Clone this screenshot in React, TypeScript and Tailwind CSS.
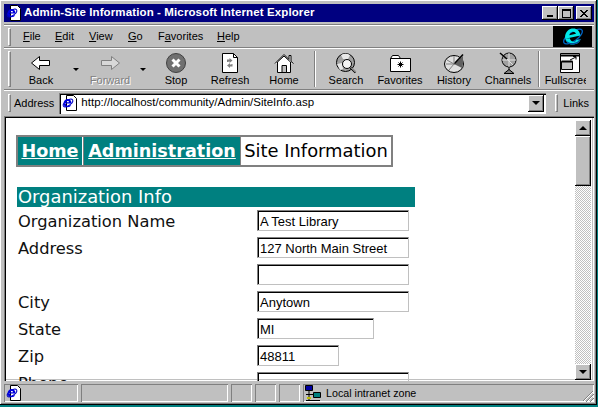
const raised = "shadow-[inset_-1px_-1px_0_#000,inset_1px_1px_0_#fff,inset_-2px_-2px_0_#808080]";
const sunkenCell = "shadow-[inset_1px_1px_0_#808080,inset_-1px_-1px_0_#fff]";
const groove = "border-t border-t-[#808080] shadow-[inset_0_1px_0_#fff]";

const Grip = ({ h }: { h: string }) => (
  <div className={`w-[3px] shrink-0 border-l border-t border-white border-r border-b border-r-[#808080] border-b-[#808080] ${h}`} />
);

const IeLogo = () => (
  <svg width="24" height="21" viewBox="0 0 24 21" fill="none">
    <ellipse cx="12" cy="10.500" rx="11" ry="4.500" transform="rotate(-35 12 10.500)" stroke="#0060c0" strokeWidth="1.300" />
    <g transform="rotate(-12 12 10.500) translate(1 -0.500)">
      <path d="M3 11.500h15.500c.3-5.500-2.800-8.500-7-8.500C6.800 3 3 6.800 3 11.500c0 4.500 3.300 7.500 8 7.500 3.300 0 5.600-1.400 7-4h-4.500c-.7.900-1.500 1.300-2.500 1.300-2 0-3.300-1.700-3.500-4.300zM7.700 9c.3-1.600 1.700-2.800 3.600-2.800 1.700 0 3 1.100 3.200 2.800z" fill="#00e8e8" fillRule="evenodd" />
      <path d="M3 12.500c.3 3.900 3.500 6.500 8 6.500 3.300 0 5.600-1.400 7-4l-1-.5c-1.300 2-3.200 3-6 3-3.500 0-6.500-2-8-5z" fill="#0050a0" />
    </g>
  </svg>
);

const PageIe = () => (
  <div className="relative h-[16px] w-[16px] shrink-0">
    <svg width="16" height="16" viewBox="0 0 16 16">
      <path d="M4.500.5h7l3 3v12h-10z" fill="#fff" stroke="#000" />
    </svg>
    <div className="absolute left-0 top-[2px]">
      <svg width="12" height="12" viewBox="0 0 12 12" fill="none">
        <ellipse cx="6" cy="6" rx="5.500" ry="2.500" transform="rotate(-35 6 6)" stroke="#0000c0" />
        <path d="M1.500 6.500h8c0-3-1.500-4.500-3.700-4.500C3.500 2 1.500 3.800 1.500 6.500c0 2.300 1.800 3.800 4 3.800 1.800 0 3-.8 3.700-2H7c-.3.400-.8.600-1.300.6-1 0-1.700-.7-1.800-1.900zM4 5.200c.2-.8.800-1.300 1.700-1.300.8 0 1.300.5 1.400 1.300z" fill="#0000e0" fillRule="evenodd" />
      </svg>
    </div>
  </div>
);

const BackIcon = () => (
  <svg width="22" height="16" viewBox="0 0 22 16">
    <path d="M1.500 8 9.500 1.500v4h10v5h-10v4z" fill="#fff" stroke="#000" />
  </svg>
);
const ForwardIcon = () => (
  <svg width="22" height="16" viewBox="0 0 22 16">
    <path d="M20.500 8 12.500 1.500v4h-10v5h10v4z" fill="#d8d8d8" stroke="#808080" />
  </svg>
);
const StopIcon = () => (
  <svg width="20" height="20" viewBox="0 0 20 20">
    <circle cx="10" cy="10" r="9.500" fill="#707070" stroke="#404040" />
    <path d="M6.500 6.500l7 7M13.500 6.500l-7 7" stroke="#fff" strokeWidth="3" />
  </svg>
);
const RefreshIcon = () => (
  <svg width="18" height="20" viewBox="0 0 18 20" fill="none">
    <path d="M1.500.5h11l4 4v15h-15z" fill="#fff" stroke="#000" />
    <path d="M12.500.5v4h4" stroke="#000" />
    <path d="M6 9V6.500h2.500V5l3 2.500-3 2.500V8.500H7.500V9z" fill="#808080" />
    <path d="M11.500 11v2.500H9V15l-3-2.500L9 10v1.500h1.500V11z" fill="#808080" />
  </svg>
);
const HomeIcon = () => (
  <svg width="20" height="20" viewBox="0 0 20 20">
    <path d="M1 10.500 10 1.500l5 5V2.500h2v6l2.500 2" fill="#fff" stroke="#000" />
    <path d="M3.500 9v10.500h13V9L10 3z" fill="#fff" stroke="#000" />
    <path d="M8 19.500v-7h4.500v7z" fill="#c0c0c0" stroke="#000" />
  </svg>
);
const SearchIcon = () => (
  <svg width="21" height="21" viewBox="0 0 21 21" fill="none">
    <circle cx="9.500" cy="9.500" r="9" fill="#a0a0a0" stroke="#000" />
    <path d="M5 2a9 9 0 0 1 9 0l-2 4H7zM1 11l5-1 1 6-3 1z" fill="#e8e8e8" />
    <circle cx="11" cy="11" r="4.500" fill="#f4f4f4" stroke="#000" />
    <path d="M14.500 14.500l5 5" stroke="#000" strokeWidth="2" />
    <path d="M15 14.500l4.500 4.500" stroke="#fff" />
  </svg>
);
const FavoritesIcon = () => (
  <svg width="21" height="17" viewBox="0 0 21 17">
    <path d="M.5 16.500V3.500l2-3h6l2 3h10v13z" fill="#fff" stroke="#000" />
    <path d="M.5 3.500h20" stroke="#000" />
    <path d="M10.500 6.500v6M7.500 9.500h6M8.500 7.500l4 4M12.500 7.500l-4 4" stroke="#000" />
  </svg>
);
const HistoryIcon = () => (
  <svg width="21" height="20" viewBox="0 0 21 20">
    <ellipse cx="10" cy="11" rx="9.500" ry="8.500" fill="#e0e0e0" stroke="#000" />
    <path d="M10 11l9-8v8l-1 4z" fill="#606060" />
    <path d="M10 11L19 1.500" stroke="#000" strokeWidth="1.500" />
    <path d="M10 11V3M10 11L3 7M10 11H2M10 11l-5 6" stroke="#808080" />
  </svg>
);
const ChannelsIcon = () => (
  <svg width="18" height="22" viewBox="0 0 18 22">
    <circle cx="10" cy="8" r="7" fill="#a0a0a0" stroke="#000" />
    <path d="M5 4l9 9M10 1v14M3 8h14" stroke="#e0e0e0" />
    <path d="M1 1l7 6" stroke="#000" strokeWidth="1.500" />
    <path d="M10 15v3M5 21.500l5-4 5 4z" fill="#808080" stroke="#000" />
  </svg>
);
const FullscreenIcon = () => (
  <svg width="20" height="20" viewBox="0 0 20 20" fill="none">
    <path d="M.5.500h19v19H.500z" fill="#fff" stroke="#000" />
    <path d="M1 1.500h18v2H1z" fill="#000" />
    <path d="M1.500 8.500h11v8h-11z" fill="#c0c0c0" stroke="#000" />
    <path d="M1.500 8.500h11" stroke="#000" strokeWidth="2" />
    <path d="M10 7l6-3M13 3.500h3v3" stroke="#000" />
  </svg>
);
const NetworkIcon = () => (
  <svg width="16" height="16" viewBox="0 0 16 16">
    <path d="M.5.500h7v5h-7z" fill="#0000a0" stroke="#000" />
    <path d="M8.500 7.500h7v5h-7z" fill="#008080" stroke="#000" />
    <path d="M4 6v9M1 9.500h7M1 15.500h14" stroke="#000" />
    <path d="M2 12h4v2H2z" fill="#c0c000" />
  </svg>
);

const ToolButton = ({ label, icon, disabled }: { label: string; icon: React.ReactNode; disabled?: boolean }) => (
  <div className="flex w-[54px] shrink-0 flex-col items-center">
    <div className="flex h-[24px] items-center justify-center">{icon}</div>
    <span className={`-mt-[1px] whitespace-nowrap text-[11px] leading-[13px] ${disabled ? "text-[#808080] [text-shadow:1px_1px_0_#fff]" : ""}`}>
      {label}
    </span>
  </div>
);

const Caret = ({ w }: { w: string }) => (
  <div className={`flex shrink-0 justify-center pt-[17px] ${w}`}>
    <div className="h-0 w-0 border-x-[3px] border-t-[3px] border-x-transparent border-t-black" />
  </div>
);

const ToolSep = () => <div className="mx-[3px] h-[36px] w-[2px] shrink-0 border-l border-r border-l-[#808080] border-r-white" />;

const Field = ({ label, value, width }: { label?: string; value?: string; width: string }) => (
  <div className="flex h-[27px] items-start">
    <div className="w-[240px] shrink-0 pl-[1px] pt-[1px] font-['DejaVu_Sans'] text-[16.3px] leading-[21px] text-[#111]">{label}</div>
    <div className={`h-[21px] border border-[#c0c0c0] border-l-[#808080] border-t-[#808080] shadow-[inset_1px_1px_0_#000] pl-[2px] pt-[3px] text-[13px] leading-[16px] ${width}`}>
      {value}
    </div>
  </div>
);

export default function App() {
  return (
    <div className="h-[407px] w-[598px] overflow-hidden bg-[#008080] font-['Liberation_Sans',sans-serif] text-black">
      <div className="flex h-[405px] w-[597px] flex-col bg-[#c0c0c0] p-[4px] pr-[3px] shadow-[inset_-1px_-1px_0_#000,inset_1px_1px_0_#fff,inset_-2px_-2px_0_#808080]">
        {/* title bar */}
        <div className="flex h-[18px] shrink-0 items-center bg-[#000080] pl-[2px] pr-[2px] text-white">
          <div className="mr-[2px] shrink-0"><PageIe /></div>
          <span className="whitespace-nowrap text-[11.5px] font-bold tracking-[0.12px]">Admin-Site Information - Microsoft Internet Explorer</span>
          <div className="ml-auto flex text-black">
            <div className={`flex h-[14px] w-[16px] items-end justify-center pb-[3px] bg-[#c0c0c0] ${raised}`}><div className="h-[2px] w-[6px] bg-black" /></div>
            <div className={`flex h-[14px] w-[16px] items-center justify-center bg-[#c0c0c0] ${raised}`}><div className="h-[9px] w-[9px] border border-t-2 border-black" /></div>
            <div className={`ml-[2px] flex h-[14px] w-[16px] items-center justify-center bg-[#c0c0c0] ${raised}`}>
              <svg width="8" height="7" viewBox="0 0 8 7"><path d="M0 0l7 7M1 0l7 7M7 0L0 7M8 0L1 7" stroke="#000" /></svg>
            </div>
          </div>
        </div>

        {/* menu row */}
        <div className="mt-[2px] flex h-[23px] shrink-0 items-center shadow-[inset_0_1px_0_#808080,inset_0_2px_0_#fff]">
          <div className="ml-[4px] mt-[2px]"><Grip h="h-[18px]" /></div>
          <div className="mt-[2px] flex text-[11px]">
            <span className="ml-[12px] w-[32px]"><u>F</u>ile</span>
            <span className="w-[34px]"><u>E</u>dit</span>
            <span className="w-[39px]"><u>V</u>iew</span>
            <span className="w-[30px]"><u>G</u>o</span>
            <span className="w-[59px]">F<u>a</u>vorites</span>
            <span><u>H</u>elp</span>
          </div>
          <div className="ml-auto mr-[2px] mt-[2px] flex h-[21px] w-[39px] items-center justify-center overflow-hidden bg-black">
            <IeLogo />
          </div>
        </div>

        {/* toolbar */}
        <div className={`flex h-[42px] shrink-0 items-start overflow-hidden pt-[3px] ${groove}`}>
          <div className="ml-[4px]"><Grip h="h-[36px]" /></div>
          <div className="ml-[3px] flex w-[573px] shrink-0 items-start overflow-hidden">
            <ToolButton label="Back" icon={<BackIcon />} />
            <Caret w="w-[15px]" />
            <ToolButton label="Forward" icon={<ForwardIcon />} disabled />
            <Caret w="w-[12px]" />
            <ToolButton label="Stop" icon={<StopIcon />} />
            <ToolButton label="Refresh" icon={<RefreshIcon />} />
            <ToolButton label="Home" icon={<HomeIcon />} />
            <ToolSep />
            <ToolButton label="Search" icon={<SearchIcon />} />
            <ToolButton label="Favorites" icon={<FavoritesIcon />} />
            <ToolButton label="History" icon={<HistoryIcon />} />
            <ToolButton label="Channels" icon={<ChannelsIcon />} />
            <div className="ml-[3px] h-[36px] w-[2px] shrink-0 border-l border-r border-l-[#808080] border-r-white" />
            <div className="w-[46px] shrink-0 overflow-hidden"><div className="ml-[3px]"><ToolButton label="Fullscreen" icon={<FullscreenIcon />} /></div></div>
          </div>
        </div>

        {/* address bar */}
        <div className={`flex h-[27px] shrink-0 items-center ${groove}`}>
          <div className="ml-[4px]"><Grip h="h-[18px]" /></div>
          <span className="ml-[3px] text-[11px]">Address</span>
          <div className="ml-[5px] flex h-[21px] w-[487px] items-center bg-white shadow-[inset_1px_1px_0_#808080,inset_2px_2px_0_#000,inset_-1px_-1px_0_#fff]">
            <div className="ml-[3px]"><PageIe /></div>
            <span className="ml-[3px] text-[11.5px]">http://localhost/community/Admin/SiteInfo.asp</span>
            <div className={`ml-auto mr-[2px] flex h-[17px] w-[16px] items-center justify-center bg-[#c0c0c0] ${raised}`}>
              <div className="h-0 w-0 border-x-[4px] border-t-[4px] border-x-transparent border-t-black" />
            </div>
          </div>
          <div className="ml-[9px]"><Grip h="h-[18px]" /></div>
          <span className="ml-[5px] text-[11px]">Links</span>
        </div>

        {/* page frame */}
        <div className="flex h-[265px] shrink-0 overflow-hidden bg-white shadow-[inset_1px_1px_0_#808080,inset_2px_2px_0_#000,inset_-1px_-1px_0_#fff,inset_-2px_-2px_0_#c0c0c0]">
          <div className="min-w-0 flex-1 overflow-hidden pl-[12px] pt-[19px]">
            <div className="flex h-[32px] w-[377px] border-2 border-[#808080] font-['DejaVu_Sans',sans-serif]">
              <div className="flex w-[64px] items-center justify-center bg-[#008080] text-[17.6px] font-bold text-white underline">Home</div>
              <div className="ml-[1px] flex w-[157px] items-center justify-center border-l border-[#808080] bg-[#008080] text-[17.6px] font-bold text-white underline">Administration</div>
              <div className="flex flex-1 items-center justify-center border-l border-[#808080] text-[17.9px]">Site Information</div>
            </div>
            <div className="ml-[1px] mt-[20px] h-[20px] w-[398px] bg-[#008080] pl-[1px] font-['DejaVu_Sans',sans-serif] text-[17.9px] leading-[20px] text-white">Organization Info</div>
            <div className="ml-[1px] mt-[3px]">
              <Field label="Organization Name" value="A Test Library" width="w-[152px]" />
              <Field label="Address" value="127 North Main Street" width="w-[152px]" />
              <Field width="w-[152px]" />
              <Field label="City" value="Anytown" width="w-[152px]" />
              <Field label="State" value="MI" width="w-[117px]" />
              <Field label="Zip" value="48811" width="w-[82px]" />
              <Field label="Phone" width="w-[152px]" />
            </div>
          </div>

          {/* scrollbar */}
          <div className="mb-[1px] mr-[3px] mt-[4px] flex w-[16px] shrink-0 flex-col bg-[repeating-conic-gradient(#c0c0c0_0_25%,#fff_0_50%)] bg-[length:2px_2px]">
            <div className={`flex h-[16px] shrink-0 items-center justify-center bg-[#c0c0c0] ${raised}`}>
              <div className="h-0 w-0 border-x-[4px] border-b-[4px] border-x-transparent border-b-black" />
            </div>
            <div className={`h-[50px] shrink-0 bg-[#c0c0c0] ${raised}`} />
            <div className={`mt-auto flex h-[16px] shrink-0 items-center justify-center bg-[#c0c0c0] ${raised}`}>
              <div className="h-0 w-0 border-x-[4px] border-t-[4px] border-x-transparent border-t-black" />
            </div>
          </div>
        </div>

        {/* status bar */}
        <div className="mt-[3px] flex h-[18px] shrink-0 gap-[3px] text-[10.7px]">
          <div className={`flex w-[74px] items-center pl-[2px] ${sunkenCell}`}><PageIe /></div>
          <div className={`w-[147px] ${sunkenCell}`} />
          <div className={`w-[21px] ${sunkenCell}`} />
          <div className={`w-[21px] ${sunkenCell}`} />
          <div className={`w-[21px] ${sunkenCell}`} />
          <div className={`flex flex-1 items-center pl-[2px] ${sunkenCell}`}>
            <NetworkIcon />
            <span className="ml-[5px] whitespace-nowrap">Local intranet zone</span>
            <svg className="ml-auto mt-auto" width="12" height="12" viewBox="0 0 12 12">
              <path d="M11 1L1 11M12 4L4 12M12 8L8 12" stroke="#808080" />
              <path d="M11 2L2 11M12 5L5 12M12 9L9 12" stroke="#fff" />
            </svg>
          </div>
        </div>
      </div>
    </div>
  );
}
